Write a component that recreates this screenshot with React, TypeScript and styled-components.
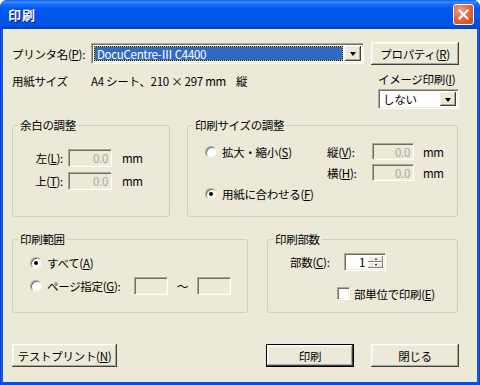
import styled, { createGlobalStyle } from "styled-components";

const GlobalStyle = createGlobalStyle`
  html, body {
    margin: 0;
    padding: 0;
    background: #ffffff;
  }
  body {
    font-family: "Noto Sans CJK JP", "Noto Sans", sans-serif;
    font-size: 11.5px;
    letter-spacing: -0.3px;
    line-height: 14px;
    color: #000;
  }
`;

const Window = styled.div`
  width: 480px;
  height: 385px;
  display: flex;
  flex-direction: column;
  background: linear-gradient(to right, #0831D9 0px, #166AEE 2px, #0A4BE0 3px, #0A4BE0 477px, #166AEE 478px, #0831D9 480px);
  border-radius: 7px 7px 0 0;
  overflow: hidden;
`;

const TitleBar = styled.div`
  height: 29px;
  flex: none;
  display: flex;
  align-items: center;
  justify-content: space-between;
  padding: 0 6px 0 8px;
  background: linear-gradient(
    to bottom,
    #0A5DEB 0%,
    #3D8FFF 7%,
    #1B6EF7 14%,
    #0058EE 30%,
    #0055E9 65%,
    #0052E4 85%,
    #0043C9 100%
  );
`;

const Title = styled.span`
  font-size: 13px;
  font-weight: bold;
  color: #fff;
  text-shadow: 1px 1px 0 #0A1A8C;
  letter-spacing: 1px;
`;

const CloseButton = styled.div`
  width: 21px;
  height: 21px;
  box-sizing: border-box;
  border: 1px solid #fff;
  border-radius: 3px;
  background: radial-gradient(circle at 35% 30%, #F2A58A 0%, #E36A43 45%, #C9461F 100%);
  display: flex;
  align-items: center;
  justify-content: center;
`;

const Client = styled.div`
  flex: 1;
  margin: 0 3px 3px;
  background: #ECE9D8;
  padding: 13px 18px 0 9px;
  display: flex;
  flex-direction: column;
`;

const Row = styled.div`
  display: flex;
  align-items: center;
`;

const TopRow = styled(Row)`
  height: 23px;
`;

const FieldLabel = styled.span<{ $w?: number }>`
  width: ${(p) => (p.$w ? `${p.$w}px` : "auto")};
  flex: none;
  white-space: nowrap;
`;

const U = styled.span`
  text-decoration: underline;
  text-underline-offset: 1px;
`;

const Sunken = styled.div<{ $w: number; $h: number; $bg?: string }>`
  width: ${(p) => p.$w}px;
  height: ${(p) => p.$h}px;
  box-sizing: border-box;
  flex: none;
  background: ${(p) => p.$bg ?? "#fff"};
  border: 1px solid;
  border-color: #ACA899 #fff #fff #ACA899;
  box-shadow: inset 1px 1px 0 #716F64, inset -1px -1px 0 #F1EFE2;
  display: flex;
  align-items: stretch;
  padding: 2px;
`;

const ComboText = styled.div`
  flex: 1;
  display: flex;
  align-items: center;
  padding-left: 2px;
  white-space: nowrap;
`;

const Highlight = styled.div`
  flex: 1;
  display: flex;
  align-items: center;
  padding-left: 2px;
  margin-right: 2px;
  color: #fff;
  border: 1px dotted #111;
  background: linear-gradient(#316AC5, #316AC5) padding-box, #E6C65A border-box;
  white-space: nowrap;
`;

const ArrowBox = styled.div`
  width: 16px;
  flex: none;
  box-sizing: border-box;
  background: #ECE9D8;
  box-shadow: inset -1px -1px 0 #404040, inset 1px 1px 0 #F5F4EA, inset -2px -2px 0 #ACA899;
  display: flex;
  align-items: center;
  justify-content: center;
  &::after {
    content: "";
    border-left: 3.5px solid transparent;
    border-right: 3.5px solid transparent;
    border-top: 4px solid #000;
    margin-top: 1px;
  }
`;

const Button = styled.button<{ $w: number; $default?: boolean }>`
  width: ${(p) => p.$w}px;
  height: 23px;
  flex: none;
  box-sizing: border-box;
  padding: 0;
  font: inherit;
  letter-spacing: inherit;
  color: #000;
  background: #ECE9D8;
  border: ${(p) => (p.$default ? "1px solid #000" : "none")};
  box-shadow: inset -1px -1px 0 #404040, inset 1px 1px 0 #fff, inset -2px -2px 0 #ACA899,
    inset 2px 2px 0 #F5F4EA;
`;

const PaperRow = styled(Row)`
  margin-top: 7px;
  align-items: flex-start;
`;

const PaperText = styled.span<{ $w: number }>`
  width: ${(p) => p.$w}px;
  flex: none;
  margin-top: 2px;
  white-space: nowrap;
`;

const ImageColumn = styled.div`
  margin-left: auto;
  width: 81px;
  display: flex;
  flex-direction: column;
  gap: 3px;
`;

const GroupRow = styled.div<{ $cols: string; $top: number }>`
  display: grid;
  grid-template-columns: ${(p) => p.$cols};
  margin-top: ${(p) => p.$top}px;
`;

const Group = styled.fieldset<{ $h: number }>`
  margin: 0;
  padding: 0;
  min-width: 0;
  height: ${(p) => p.$h}px;
  box-sizing: border-box;
  border: 1px solid #D0D0BF;
  border-radius: 3px;
  & + & {
    grid-column-start: 3;
  }
`;

const Legend = styled.legend`
  margin-left: 5px;
  padding: 0 2px;
  line-height: 14px;
`;

const MarginGrid = styled.div`
  display: grid;
  grid-template-columns: 55px 44px auto;
  grid-auto-rows: 18px;
  row-gap: 5px;
  padding-top: 17px;
  align-items: center;
`;

const RightLabel = styled.span`
  text-align: right;
  padding-right: 5px;
  white-space: nowrap;
`;

const Unit = styled.span<{ $pad: number }>`
  padding-left: ${(p) => p.$pad}px;
`;

const Disabled = styled(Sunken)`
  color: #ACA899;
  justify-content: flex-end;
  align-items: center;
  padding: 0 3px 0 0;
  background: #ECE9D8;
`;

const SizeGrid = styled.div`
  display: grid;
  grid-template-columns: 122px 45px 42px auto;
  grid-template-rows: 17px 17px 14px;
  row-gap: 4px;
  padding: 11px 0 0 17px;
  align-items: center;
`;

const FitRow = styled.div`
  grid-column: 1 / -1;
  margin-top: 4px;
`;

const RadioItem = styled.label<{ $w?: number }>`
  display: flex;
  align-items: center;
  gap: 5px;
  white-space: nowrap;
  width: ${(p) => (p.$w ? `${p.$w}px` : "auto")};
  flex: none;
`;

const RadioCircle = styled.span<{ $checked?: boolean }>`
  width: 12px;
  height: 12px;
  flex: none;
  box-sizing: border-box;
  border-radius: 50%;
  background: #fff;
  border: 1px solid;
  border-color: #ACA899 #F1EFE2 #F1EFE2 #ACA899;
  box-shadow: inset 1px 1px 0 #716F64;
  display: flex;
  align-items: center;
  justify-content: center;
  &::after {
    content: "";
    width: 4px;
    height: 4px;
    border-radius: 50%;
    background: ${(p) => (p.$checked ? "#000" : "transparent")};
  }
`;

const RangeBody = styled.div`
  display: flex;
  flex-direction: column;
  gap: 5px;
  padding: 8px 0 0 17px;
`;

const RangeRow = styled.div`
  height: 18px;
  display: flex;
  align-items: center;
`;

const Tilde = styled.span`
  width: 29px;
  text-align: center;
  flex: none;
`;

const CopiesBody = styled.div`
  display: flex;
  flex-direction: column;
  padding: 7px 0 0 22px;
`;

const SpinText = styled.div`
  flex: 1;
  display: flex;
  align-items: center;
  justify-content: flex-end;
  padding-right: 3px;
`;

const SpinButtons = styled.div`
  width: 15px;
  flex: none;
  display: flex;
  flex-direction: column;
`;

const SpinHalf = styled.div<{ $up?: boolean }>`
  flex: 1;
  background: #ECE9D8;
  box-shadow: inset -1px -1px 0 #808080, inset 1px 1px 0 #fff;
  display: flex;
  align-items: center;
  justify-content: center;
  &::after {
    content: "";
    border-left: 1.5px solid transparent;
    border-right: 1.5px solid transparent;
    ${(p) => (p.$up ? "border-bottom: 2px solid #000;" : "border-top: 2px solid #000;")}
  }
`;

const CheckRow = styled.label`
  display: flex;
  align-items: center;
  gap: 4px;
  margin-top: 16px;
  padding-left: 47px;
  height: 13px;
  white-space: nowrap;
`;

const CheckBox = styled.span`
  width: 13px;
  height: 13px;
  flex: none;
  box-sizing: border-box;
  background: #fff;
  border: 1px solid;
  border-color: #ACA899 #fff #fff #ACA899;
  box-shadow: inset 1px 1px 0 #716F64, inset -1px -1px 0 #F1EFE2;
`;

const ButtonRow = styled(Row)`
  margin-top: 31px;
  gap: 17px;
  & > :nth-child(2) {
    margin-left: auto;
  }
`;

export default function App() {
  return (
    <>
      <GlobalStyle />
      <Window>
        <TitleBar>
          <Title>印刷</Title>
          <CloseButton>
            <svg width="11" height="11" viewBox="0 0 11 11">
              <path d="M1.5 1.5 L9.5 9.5 M9.5 1.5 L1.5 9.5" stroke="#fff" strokeWidth="2" strokeLinecap="square" />
            </svg>
          </CloseButton>
        </TitleBar>
        <Client>
          <TopRow>
            <FieldLabel $w={79}>
              プリンタ名(<U>P</U>):
            </FieldLabel>
            <Sunken $w={273} $h={21}>
              <Highlight>DocuCentre-Ⅲ C4400</Highlight>
              <ArrowBox />
            </Sunken>
            <Button $w={88} style={{ marginLeft: "auto" }}>
              プロパティ(<U>R</U>)
            </Button>
          </TopRow>

          <PaperRow>
            <PaperText $w={79}>用紙サイズ</PaperText>
            <PaperText $w={145}>A4 シート、210 × 297 mm</PaperText>
            <PaperText $w={14}>縦</PaperText>
            <ImageColumn>
              <FieldLabel>
                イメージ印刷(<U>I</U>)
              </FieldLabel>
              <Sunken $w={81} $h={20}>
                <ComboText>しない</ComboText>
                <ArrowBox />
              </Sunken>
            </ImageColumn>
          </PaperRow>

          <GroupRow $cols="158px 17px 271px" $top={9}>
            <Group $h={99}>
              <Legend>余白の調整</Legend>
              <MarginGrid>
                <RightLabel>
                  左(<U>L</U>):
                </RightLabel>
                <Disabled $w={44} $h={18}>0.0</Disabled>
                <Unit $pad={10}>mm</Unit>
                <RightLabel>
                  上(<U>T</U>):
                </RightLabel>
                <Disabled $w={44} $h={18}>0.0</Disabled>
                <Unit $pad={10}>mm</Unit>
              </MarginGrid>
            </Group>
            <Group $h={99}>
              <Legend>印刷サイズの調整</Legend>
              <SizeGrid>
                <RadioItem>
                  <RadioCircle />
                  <span>
                    拡大・縮小(<U>S</U>)
                  </span>
                </RadioItem>
                <FieldLabel>
                  縦(<U>V</U>):
                </FieldLabel>
                <Disabled $w={42} $h={17}>0.0</Disabled>
                <Unit $pad={9}>mm</Unit>
                <span />
                <FieldLabel>
                  横(<U>H</U>):
                </FieldLabel>
                <Disabled $w={42} $h={17}>0.0</Disabled>
                <Unit $pad={9}>mm</Unit>
                <FitRow>
                  <RadioItem>
                    <RadioCircle $checked />
                    <span>
                      用紙に合わせる(<U>F</U>)
                    </span>
                  </RadioItem>
                </FitRow>
              </SizeGrid>
            </Group>
          </GroupRow>

          <GroupRow $cols="236px 19px 191px" $top={15}>
            <Group $h={81}>
              <Legend>印刷範囲</Legend>
              <RangeBody>
                <RangeRow>
                  <RadioItem>
                    <RadioCircle $checked />
                    <span>
                      すべて(<U>A</U>)
                    </span>
                  </RadioItem>
                </RangeRow>
                <RangeRow>
                  <RadioItem $w={104}>
                    <RadioCircle />
                    <span>
                      ページ指定(<U>G</U>):
                    </span>
                  </RadioItem>
                  <Disabled $w={34} $h={18} />
                  <Tilde>～</Tilde>
                  <Disabled $w={34} $h={18} />
                </RangeRow>
              </RangeBody>
            </Group>
            <Group $h={81}>
              <Legend>印刷部数</Legend>
              <CopiesBody>
                <Row>
                  <FieldLabel $w={54}>
                    部数(<U>C</U>):
                  </FieldLabel>
                  <Sunken $w={42} $h={18}>
                    <SpinText>1</SpinText>
                    <SpinButtons>
                      <SpinHalf $up />
                      <SpinHalf />
                    </SpinButtons>
                  </Sunken>
                </Row>
                <CheckRow>
                  <CheckBox />
                  <span>
                    部単位で印刷(<U>E</U>)
                  </span>
                </CheckRow>
              </CopiesBody>
            </Group>
          </GroupRow>

          <ButtonRow>
            <Button $w={105}>
              テストプリント(<U>N</U>)
            </Button>
            <Button $w={88} $default>
              印刷
            </Button>
            <Button $w={88}>閉じる</Button>
          </ButtonRow>
        </Client>
      </Window>
    </>
  );
}
